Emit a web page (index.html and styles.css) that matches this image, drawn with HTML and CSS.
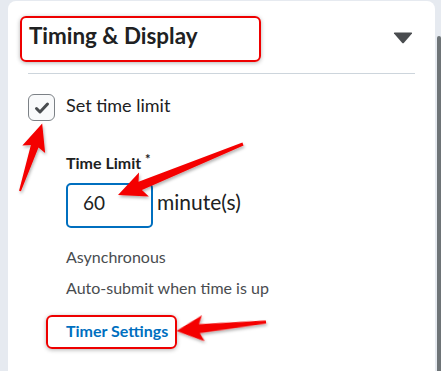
FILE: index.html
```html
<!DOCTYPE html>
<html lang="en">

<head>
    <meta charset="UTF-8">
    <meta name="viewport" content="width=device-width, initial-scale=1.0">
    <title>Timing &amp; Display</title>
    <link rel="stylesheet" href="styles.css">
</head>

<body>
    <div class="card">
        <div class="panel-header">
            <h2 class="panel-title">Timing &amp; Display</h2>
            <svg class="caret" width="20" height="12" viewBox="0 0 20 12">
                <path d="M1 1.5 Q0.5 0.5 1.8 0.5 H18.2 Q19.5 0.5 19 1.5 L11 10.8 Q10 11.8 9 10.8 Z" fill="#494c4f"/>
            </svg>
        </div>

        <label class="check-row">
            <span class="checkbox">
                <svg width="16" height="14" viewBox="0 0 16 14">
                    <path d="M2.5 7.5 L6 11 L13.5 3" fill="none" stroke="#494c4f" stroke-width="3" stroke-linecap="round" stroke-linejoin="round"/>
                </svg>
            </span>
            <span class="check-text">Set time limit</span>
        </label>

        <div class="time-section">
            <div class="field-label">Time Limit <span class="req">*</span></div>
            <div class="time-row">
                <div class="number-box">60</div>
                <span class="unit">minute(s)</span>
            </div>
            <p class="summary">Asynchronous</p>
            <p class="summary second">Auto-submit when time is up</p>
            <a class="timer-link" href="#">Timer Settings</a>
        </div>
    </div>
    <div class="scrollbar"></div>

    <svg class="marks" width="441" height="371" viewBox="0 0 441 371">
        <defs>
            <filter id="shade" x="-20%" y="-20%" width="140%" height="140%">
                <feDropShadow dx="1" dy="2" stdDeviation="1.5" flood-color="#000" flood-opacity="0.3"/>
            </filter>
        </defs>
        <g filter="url(#shade)" fill="#f40000">
            <polygon transform="translate(20 191) rotate(-71.8)" points="0,-1 47,-4 44,-12 71,0 44,12 47,4 0,1"/>
            <polygon transform="translate(243 144) rotate(157.8)" points="0,-1.5 111,-4.5 107,-13 135,0 107,13 111,4.5 0,1.5"/>
            <polygon transform="translate(266 322) rotate(174.3)" points="0,-1.5 67,-4.5 63,-13 90,0 63,13 67,4.5 0,1.5"/>
        </g>
    </svg>
</body>

</html>
```

FILE: styles.css
```css
body {
    margin: 0;
    height: 371px;
    overflow: hidden;
    display: flex;
    background-color: #e6eaf0;
    color: #202122;
    font-family: Lato, "Open Sans", sans-serif;
}

.card {
    width: 427px;
    margin: 1px 0 0 8px;
    padding: 15px 20px 0 20px;
    box-sizing: border-box;
    background-color: white;
    border-radius: 8px 8px 0 0;
}

.scrollbar {
    width: 4px;
    margin: 36px 0 0 2px;
    background-color: #6e7477;
    border-radius: 3px 3px 0 0;
}

.panel-header {
    display: flex;
    justify-content: space-between;
    align-items: flex-start;
    padding-bottom: 11px;
    border-bottom: 1px solid #cdd5dc;
}

.panel-title {
    width: 241px;
    height: 46px;
    margin: 0 0 0 -8px;
    padding: 5px 0 0 7px;
    box-sizing: border-box;
    border: 2px solid #ee0000;
    border-radius: 6px;
    box-shadow: 0 1px 4px rgba(0, 0, 0, 0.3);
    font-size: 22.4px;
    font-weight: bold;
    line-height: 26px;
}

.caret {
    display: block;
    margin: 16px 2px 0 0;
}

.check-row {
    display: flex;
    align-items: flex-start;
    margin-top: 20px;
}

.checkbox {
    display: flex;
    justify-content: center;
    align-items: center;
    width: 27px;
    height: 27px;
    box-sizing: border-box;
    border: 1.5px solid #7c8186;
    border-radius: 6px;
    background-color: #f9fafb;
}

.check-text {
    margin-left: 11px;
    font-size: 18px;
    line-height: 22px;
}

.time-section {
    padding-left: 38px;
}

.field-label {
    margin-top: 33px;
    font-size: 16px;
    font-weight: bold;
    line-height: 17px;
}

.req {
    font-size: 13px;
    vertical-align: top;
    position: relative;
    top: -3px;
}

.time-row {
    display: flex;
    align-items: baseline;
    margin-top: 12px;
}

.number-box {
    width: 87px;
    height: 45px;
    padding: 6px 0 0 15px;
    box-sizing: border-box;
    border: 2px solid #006fbf;
    border-radius: 5px;
    font-size: 19px;
    line-height: 23px;
}

.unit {
    margin-left: 4px;
    font-size: 21px;
}

.summary {
    margin: 19px 0 0 0;
    color: #494c4f;
    font-size: 16px;
    line-height: 20px;
}

.summary.second {
    margin-top: 11px;
}

.timer-link {
    display: inline-block;
    margin: 17px 0 0 -20px;
    padding: 4px 7px 6px 18px;
    border: 2px solid #ee0000;
    border-radius: 6px;
    box-shadow: 0 1px 4px rgba(0, 0, 0, 0.3);
    color: #006fbf;
    font-size: 16px;
    font-weight: bold;
    line-height: 20px;
    text-decoration: none;
}

.marks {
    position: absolute;
    top: 0;
    left: 0;
    pointer-events: none;
}
```
